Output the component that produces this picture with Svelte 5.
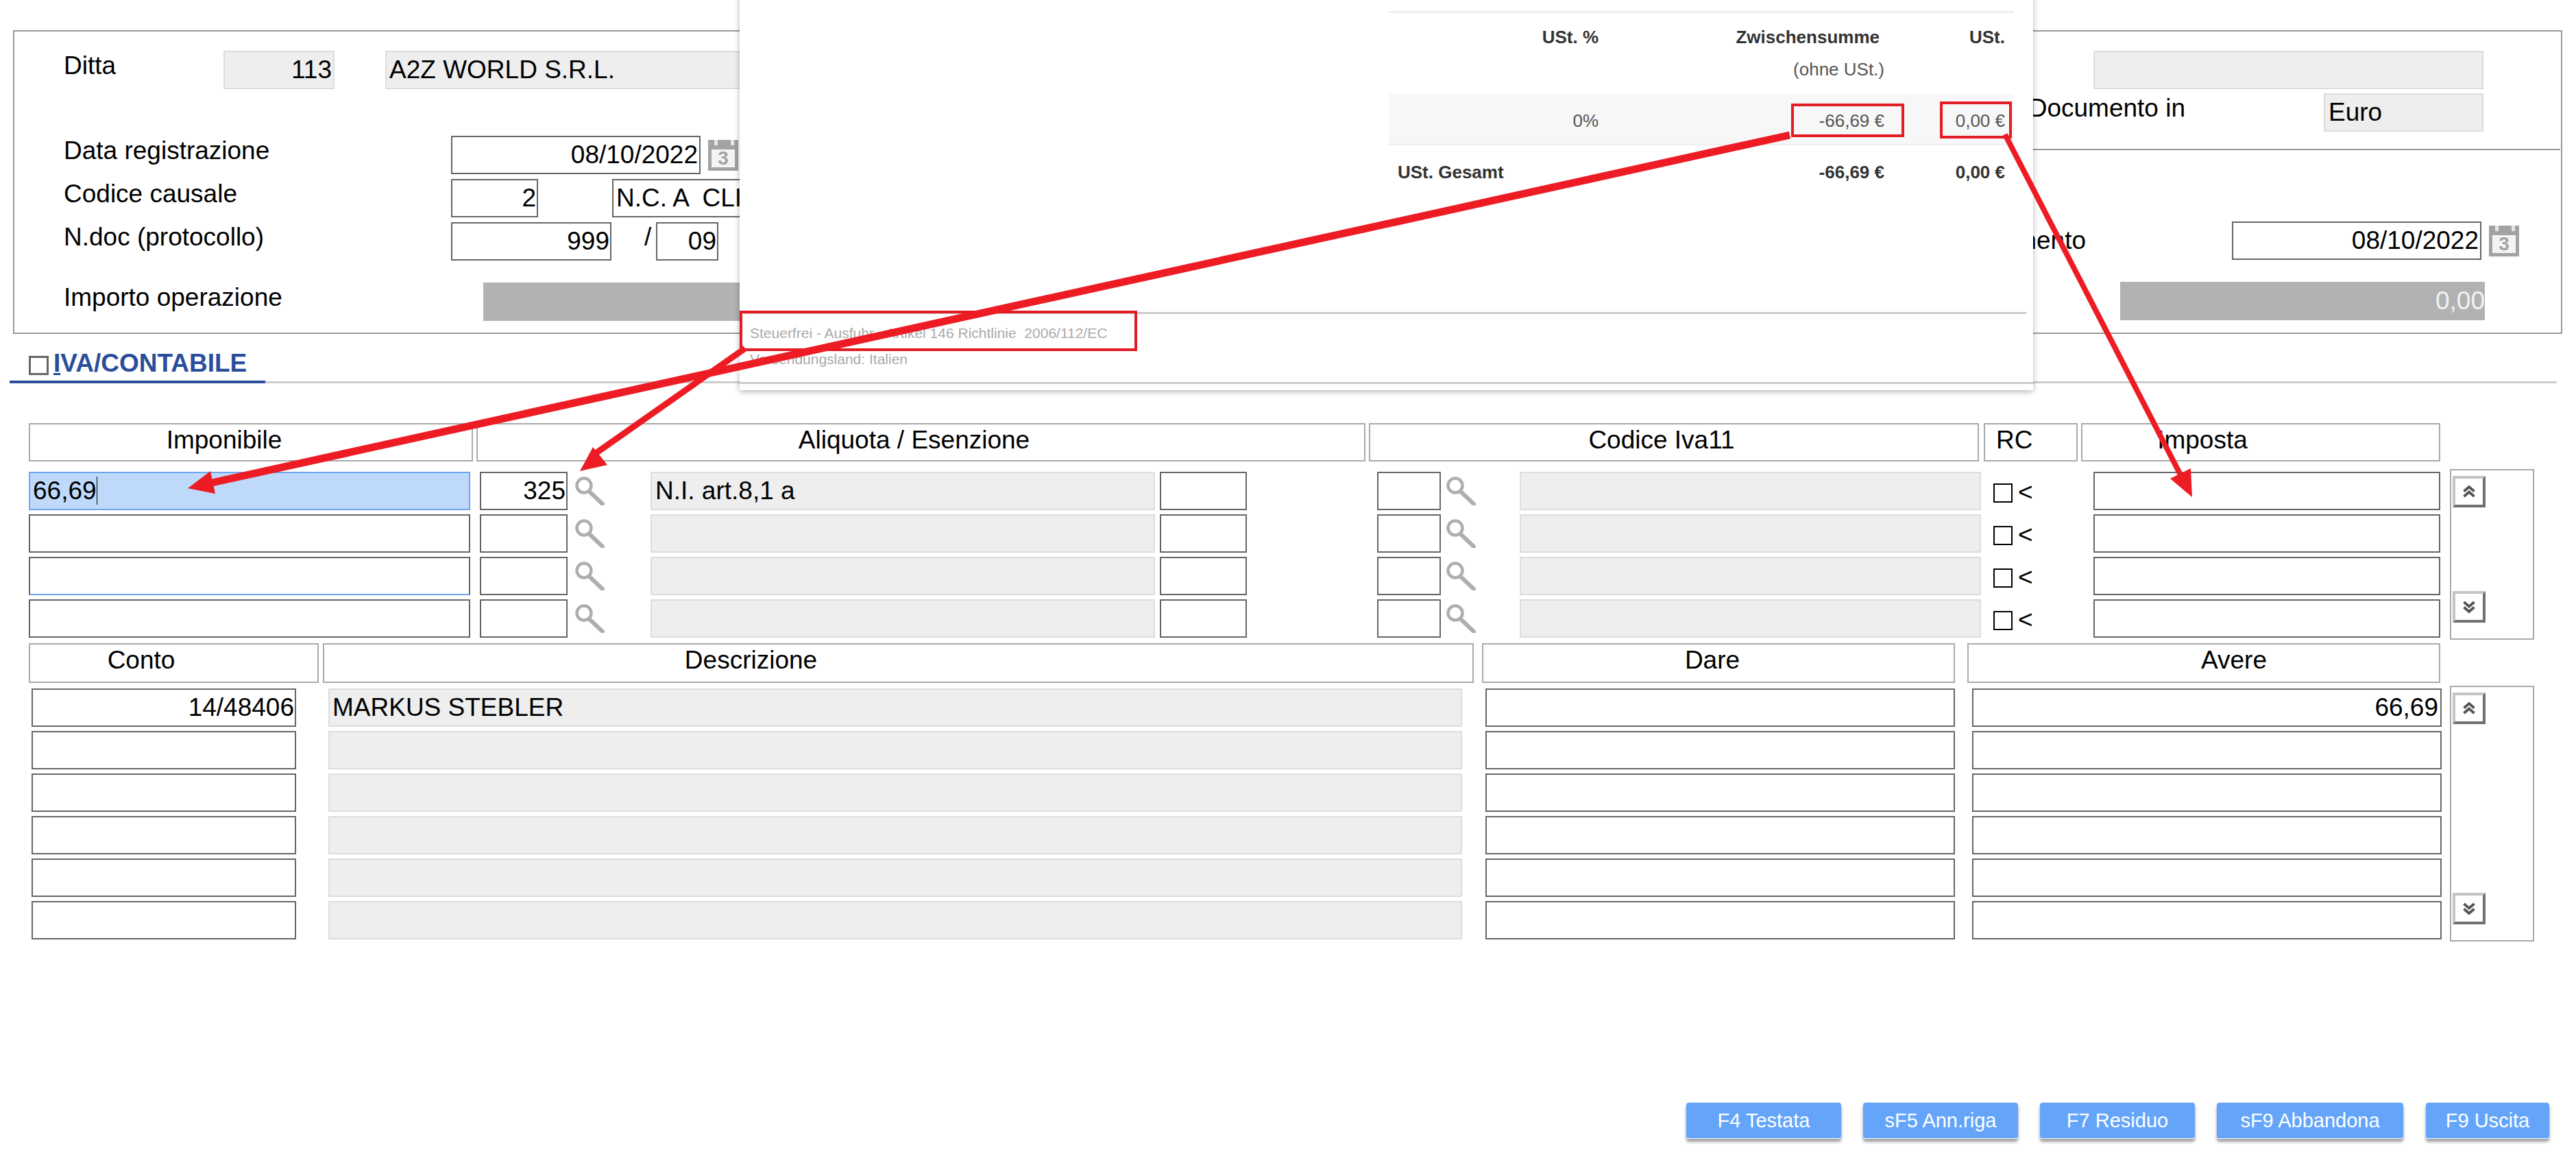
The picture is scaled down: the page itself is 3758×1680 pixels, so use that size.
<script>
  const ivaRows = [
    { imp: '66,69', active: true, ali: '325', desc: 'N.I. art.8,1 a' },
    { imp: '', ali: '', desc: '' },
    { imp: '', ali: '', desc: '', rim: true },
    { imp: '', ali: '', desc: '' }
  ];
  const contoRows = [
    { conto: '14/48406', desc: 'MARKUS STEBLER', avere: '66,69' },
    { conto: '', desc: '', avere: '' },
    { conto: '', desc: '', avere: '' },
    { conto: '', desc: '', avere: '' },
    { conto: '', desc: '', avere: '' },
    { conto: '', desc: '', avere: '' }
  ];
  const actions = [
    { label: 'F4 Testata', cls: 'b226' },
    { label: 'sF5 Ann.riga', cls: 'b226' },
    { label: 'F7 Residuo', cls: 'b226' },
    { label: 'sF9 Abbandona', cls: 'b272' },
    { label: 'F9 Uscita', cls: 'b180' }
  ];
</script>

{#snippet calendar()}
  <svg class="cal" viewBox="0 0 44 45" aria-hidden="true">
    <rect x="0" y="0" width="44" height="45" fill="#a3a3a3" />
    <rect x="9" y="0" width="5" height="8" fill="#e6e6e6" />
    <rect x="33" y="0" width="5" height="8" fill="#e6e6e6" />
    <rect x="5" y="14" width="34" height="26" fill="#f4f4f4" />
    <text x="22" y="36" text-anchor="middle" class="cal-num">3</text>
  </svg>
{/snippet}

{#snippet lens()}
  <svg class="lens" viewBox="0 0 44 43" aria-hidden="true">
    <circle cx="13" cy="14" r="10.5" fill="none" stroke="#aeaeae" stroke-width="4.5" />
    <path d="M21 23 L40 41" stroke="#aeaeae" stroke-width="6" stroke-linecap="round" />
  </svg>
{/snippet}

{#snippet chevrons(up)}
  <svg class="chev" viewBox="0 0 18 20" aria-hidden="true">
    {#if up}
      <path d="M1.5 9.5 L9 3 L16.5 9.5 M1.5 17 L9 10.5 L16.5 17" fill="none" stroke="#555" stroke-width="3.8" />
    {:else}
      <path d="M1.5 3 L9 9.5 L16.5 3 M1.5 10.5 L9 17 L16.5 10.5" fill="none" stroke="#555" stroke-width="3.8" />
    {/if}
  </svg>
{/snippet}

<div class="page">
  <section class="head">
    <div class="head-left">
      <div class="row r1">
        <span class="label l-ditta">Ditta</span>
        <div class="field ro num f-ditta">113</div>
        <div class="field ro f-rag">A2Z WORLD S.R.L.</div>
      </div>
      <div class="row r2">
        <span class="label l-wide">Data registrazione</span>
        <div class="field num f-date">08/10/2022</div>
        <div class="cal-gap">{@render calendar()}</div>
      </div>
      <div class="row r3">
        <span class="label l-wide">Codice causale</span>
        <div class="field num f-cau">2</div>
        <div class="field f-caud">N.C. A  CLIENTE</div>
      </div>
      <div class="row r3">
        <span class="label l-wide">N.doc (protocollo)</span>
        <div class="field num f-doc">999</div>
        <span class="slash">/</span>
        <div class="field num f-yr">09</div>
      </div>
      <div class="row r5">
        <span class="label l-imp">Importo operazione</span>
        <div class="total t-left"></div>
      </div>
    </div>
    <div class="head-right">
      <div class="hr-top">
        <div class="row">
          <div class="field ro f-rt"></div>
        </div>
        <div class="row r2b">
          <span class="label l-docin">Documento in</span>
          <div class="field ro f-euro">Euro</div>
        </div>
      </div>
      <div class="hr-bottom">
        <div class="row">
          <span class="label l-ddoc">Data documento</span>
          <div class="field num f-date2">08/10/2022</div>
          <div class="cal-gap">{@render calendar()}</div>
        </div>
        <div class="row r5">
          <div class="total t-right">0,00</div>
        </div>
      </div>
    </div>
  </section>

  <div class="tabbar">
    <div class="tab">
      <span class="tab-box"></span>
      <span class="tab-text"><u>I</u>VA/CONTABILE</span>
    </div>
  </div>

  <div class="hrow h-iva">
    <div class="hcell c-imp">Imponibile</div>
    <div class="hcell c-ali">Aliquota / Esenzione</div>
    <div class="hcell c-cod">Codice Iva11</div>
    <div class="hcell c-rc">RC</div>
    <div class="hcell c-ims">Imposta</div>
  </div>

  <div class="block b-iva">
    <div class="rows">
      {#each ivaRows as r}
        <div class="row drow">
          <div class="field i-imp" class:active={r.active} class:rim={r.rim}>
            {r.imp}{#if r.active}<span class="caret"></span>{/if}
          </div>
          <div class="field num i-ali">{r.ali}</div>
          <div class="lens-wrap">{@render lens()}</div>
          <div class="field ro i-desc">{r.desc}</div>
          <div class="field i-small"></div>
          <div class="field i-cod"></div>
          <div class="lens-wrap2">{@render lens()}</div>
          <div class="field ro i-cdesc"></div>
          <span class="check"></span>
          <span class="lt">&lt;</span>
          <div class="field i-ims"></div>
        </div>
      {/each}
    </div>
    <div class="scroll s-iva">
      <div class="sbtn">{@render chevrons(true)}</div>
      <div class="sbtn">{@render chevrons(false)}</div>
    </div>
  </div>

  <div class="hrow h-conto">
    <div class="hcell c-conto">Conto</div>
    <div class="hcell c-descr">Descrizione</div>
    <div class="hcell c-dare">Dare</div>
    <div class="hcell c-avere">Avere</div>
  </div>

  <div class="block b-conto">
    <div class="rows">
      {#each contoRows as r}
        <div class="row drow">
          <div class="field num j-conto">{r.conto}</div>
          <div class="field ro j-desc">{r.desc}</div>
          <div class="field j-dare"></div>
          <div class="field num j-avere">{r.avere}</div>
        </div>
      {/each}
    </div>
    <div class="scroll s-conto">
      <div class="sbtn">{@render chevrons(true)}</div>
      <div class="sbtn">{@render chevrons(false)}</div>
    </div>
  </div>

  <div class="actions">
    {#each actions as a}
      <button class="action {a.cls}">{a.label}</button>
    {/each}
  </div>

  <aside class="popup">
    <div class="vat">
      <div class="vat-head">
        <span class="th">USt. %</span>
        <span class="th th-mid">Zwischensumme</span>
        <span class="th">USt.</span>
      </div>
      <div class="vat-sub">
        <span></span>
        <span>(ohne USt.)</span>
        <span></span>
      </div>
      <div class="vat-row">
        <span>0%</span>
        <span>-66,69 €</span>
        <span>0,00 €</span>
      </div>
      <div class="vat-total">
        <span class="tl">USt. Gesamt</span>
        <span>-66,69 €</span>
        <span>0,00 €</span>
      </div>
    </div>
    <div class="foot-line"></div>
    <p class="foot f1">Steuerfrei - Ausfuhr - Artikel 146 Richtlinie  2006/112/EC</p>
    <p class="foot f2">Versendungsland: Italien</p>
    <div class="foot-rule"></div>
  </aside>

  <svg class="marks" viewBox="0 0 3758 1680" aria-hidden="true">
    <rect x="1081" y="455" width="576" height="55" class="mbox" />
    <rect x="2615" y="153" width="161" height="45" class="mbox" />
    <rect x="2832" y="150" width="101" height="50" class="mbox" />
    <path d="M2611 197 L300 706" class="mline" stroke-width="11" />
    <polygon points="307,687 274,712 314,720" class="mhead" />
    <path d="M1087 508 L862 666" class="mline" stroke-width="9" />
    <polygon points="865,652 846,687 886,678" class="mhead" />
    <path d="M2925 196 L3188 706" class="mline" stroke-width="8" />
    <polygon points="3196,683 3198,725 3166,698" class="mhead" />
  </svg>
</div>

<style>
  :global(body) {
    margin: 0;
    background: #fff;
    overflow: hidden;
  }
  .page {
    position: relative;
    width: 3758px;
    height: 1680px;
    overflow: hidden;
    background: #fff;
    font-family: "Liberation Sans", Arial, sans-serif;
    font-size: 37px;
    color: #000;
    padding-top: 44px;
    box-sizing: border-box;
  }
  .row { display: flex; align-items: flex-start; }

  /* testata */
  .head {
    margin-left: 19px;
    width: 3719px;
    height: 443px;
    box-sizing: border-box;
    border: 2px solid #999;
    padding: 1px;
    display: flex;
  }
  .head-left { width: 2378px; flex: none; padding-top: 27px; }
  .head-right { flex: 1; }
  .hr-top { height: 172px; box-sizing: border-box; padding-top: 27px; border-bottom: 2px solid #999; }
  .hr-bottom { padding-top: 104px; }
  .r2 { margin-top: 68px; }
  .r2b { margin-top: 6px; }
  .r3 { margin-top: 7px; }
  .r5 { margin-top: 32px; }
  .label { line-height: 44px; white-space: nowrap; flex: none; }
  .l-ditta { margin-left: 71px; width: 233px; }
  .l-wide { margin-left: 71px; width: 565px; }
  .l-imp { margin-left: 71px; width: 612px; }
  .l-docin { width: 788px; text-align: right; }
  .l-ddoc { width: 643px; text-align: right; line-height: 56px; }

  .field {
    height: 56px;
    line-height: 52px;
    box-sizing: border-box;
    border: 2px solid #666;
    background: #fff;
    padding: 0 4px;
    flex: none;
    white-space: pre;
    overflow: hidden;
  }
  .field.ro { background: #eee; border: 2px solid #ddd; line-height: 52px; }
  .field.num { text-align: right; padding: 0 1px 0 0; }
  .f-ditta { width: 162px; padding-right: 2px !important; }
  .f-rag { width: 1500px; margin-left: 74px; padding-left: 4px; }
  .f-date { width: 364px; padding-right: 2px !important; }
  .f-cau { width: 127px; }
  .f-caud { width: 900px; margin-left: 108px; padding-left: 4px; }
  .f-doc { width: 234px; }
  .slash { line-height: 44px; margin-left: 48px; width: 17px; flex: none; }
  .f-yr { width: 91px; }
  .cal-gap { margin-left: 11px; margin-top: 6px; flex: none; }
  .cal { display: block; width: 44px; height: 45px; }
  .cal-num { font-size: 28px; font-weight: bold; fill: #a3a3a3; font-family: "Liberation Sans", sans-serif; }
  .total {
    height: 56px;
    line-height: 56px;
    background: #b0b2b4;
    text-align: right;
    color: #f2f2f2;
    box-sizing: border-box;
    flex: none;
  }
  .t-left { width: 1600px; }
  .t-right { width: 532px; margin-left: 693px; }
  .f-rt { width: 569px; margin-left: 654px; }
  .f-euro { width: 233px; margin-left: 202px; padding-left: 5px; }
  .f-date2 { width: 364px; margin-left: 213px; padding-right: 2px !important; }

  /* tab */
  .tabbar {
    margin-left: 14px;
    width: 3716px;
    height: 72px;
    box-sizing: border-box;
    border-bottom: 3px solid #ccc;
    display: flex;
    align-items: flex-end;
  }
  .tab {
    width: 373px;
    height: 52px;
    box-sizing: border-box;
    border-bottom: 4px solid #2a4d9c;
    margin-bottom: -3px;
    padding-left: 28px;
    display: flex;
    align-items: flex-start;
    color: #2a4d9c;
    font-weight: bold;
  }
  .tab-box {
    width: 29px;
    height: 28px;
    margin-top: 12px;
    box-sizing: border-box;
    border: 3px solid #666;
    flex: none;
  }
  .tab-text { margin-left: 7px; line-height: 46px; }

  /* intestazioni */
  .hrow { display: flex; margin-left: 42px; }
  .h-iva { margin-top: 58px; }
  .h-conto { margin-top: 5px; }
  .hcell {
    height: 56px;
    line-height: 46px;
    box-sizing: border-box;
    border: 2px solid #aaa;
    text-align: center;
    flex: none;
    white-space: nowrap;
  }
  .h-conto .hcell { height: 58px; }
  .c-imp { width: 648px; padding-right: 78px; }
  .c-ali { width: 1297px; margin-left: 5px; padding-right: 20px; }
  .c-cod { width: 890px; margin-left: 5px; padding-right: 36px; }
  .c-rc { width: 137px; margin-left: 7px; text-align: left; padding-left: 16px; }
  .c-ims { width: 524px; margin-left: 5px; padding-right: 170px; }
  .c-conto { width: 423px; padding-right: 95px; }
  .c-descr { width: 1679px; margin-left: 6px; padding-right: 430px; }
  .c-dare { width: 690px; margin-left: 12px; padding-right: 18px; }
  .c-avere { width: 690px; margin-left: 18px; padding-left: 88px; }

  /* righe */
  .block { display: flex; align-items: flex-start; margin-top: 4px; }
  .b-iva { margin-top: 11px; }
  .rows { padding-top: 4px; display: flex; flex-direction: column; gap: 6px; }
  .i-imp { width: 644px; margin-left: 42px; }
  .i-imp.active { background: #bfd9fb; border-color: #6ea6ef; }
  .i-imp.rim { border-bottom-color: #6ea6ef; }
  .caret {
    display: inline-block;
    width: 1px;
    height: 41px;
    background: #000;
    vertical-align: top;
    margin-top: 5px;
  }
  .i-ali { width: 128px; margin-left: 14px; }
  .lens-wrap { margin-left: 11px; margin-top: 6px; width: 44px; flex: none; }
  .lens-wrap2 { margin-left: 8px; margin-top: 6px; width: 44px; flex: none; }
  .lens { display: block; width: 44px; height: 43px; }
  .i-desc { width: 736px; margin-left: 66px; padding-left: 5px; }
  .i-small { width: 127px; margin-left: 7px; }
  .i-cod { width: 93px; margin-left: 190px; }
  .i-cdesc { width: 673px; margin-left: 63px; }
  .check {
    width: 28px;
    height: 28px;
    margin-left: 18px;
    margin-top: 17px;
    box-sizing: border-box;
    border: 2px solid #000;
    flex: none;
  }
  .lt { width: 110px; margin-left: 8px; height: 56px; line-height: 60px; flex: none; }
  .i-ims { width: 506px; }

  .j-conto { width: 386px; margin-left: 46px; }
  .j-desc { width: 1654px; margin-left: 47px; padding-left: 4px; }
  .j-dare { width: 685px; margin-left: 34px; }
  .j-avere { width: 685px; margin-left: 25px; padding-right: 3px !important; }

  .scroll {
    width: 123px;
    box-sizing: border-box;
    border: 2px solid #aaa;
    padding: 8px 0 23px 2px;
    flex: none;
    display: flex;
    flex-direction: column;
    justify-content: space-between;
    align-items: flex-start;
  }
  .s-iva { height: 249px; margin-left: 14px; }
  .s-conto { height: 373px; margin-left: 12px; }
  .sbtn {
    width: 48px;
    height: 46px;
    box-sizing: border-box;
    border: 4px solid;
    border-color: #c4c4c4 #707070 #707070 #c4c4c4;
    display: flex;
    align-items: center;
    justify-content: center;
    background: #fff;
  }
  .chev { width: 18px; height: 20px; display: block; }

  /* azioni */
  .actions {
    display: flex;
    justify-content: flex-end;
    gap: 32px;
    margin-top: 235px;
    padding-right: 39px;
  }
  .action {
    height: 53px;
    border: 0;
    border-bottom: 1px solid #fff;
    border-radius: 4px;
    background: #64a5fa;
    color: #fff;
    font-family: "Liberation Sans", Arial, sans-serif;
    font-size: 29px;
    padding: 0;
    box-shadow: 0 4px 4px rgba(0, 0, 0, 0.4);
  }
  .b226 { width: 226px; }
  .b272 { width: 272px; margin-right: 1px; }
  .b180 { width: 180px; }

  /* documento sovrapposto */
  .popup {
    position: absolute;
    left: 1079px;
    top: -20px;
    width: 1887px;
    height: 589px;
    box-sizing: border-box;
    background: #fff;
    box-shadow: 0 2px 8px rgba(0, 0, 0, 0.3);
    padding-top: 36px;
    font-size: 26px;
    color: #555;
  }
  .vat {
    margin-left: 947px;
    width: 912px;
    border-top: 3px solid #eee;
  }
  .vat-head, .vat-sub, .vat-row, .vat-total {
    display: grid;
    grid-template-columns: 306px 417px 176px 13px;
    text-align: right;
  }
  .vat-head { height: 62px; line-height: 70px; color: #333; font-weight: bold; }
  .th-mid { padding-right: 7px; }
  .vat-sub { height: 56px; line-height: 40px; }
  .vat-row {
    height: 75px;
    line-height: 78px;
    background: #f7f7f7;
    border-bottom: 2px solid #eee;
    box-sizing: border-box;
  }
  .vat-total { height: 78px; line-height: 78px; font-weight: bold; color: #333; }
  .tl { text-align: left; padding-left: 13px; }
  .foot-line { height: 3px; background: #ccc; margin: 165px 10px 0 6px; }
  .foot {
    margin: 0;
    white-space: pre;
    font-size: 21px;
    color: #aaa;
    margin-left: 15px;
    line-height: 38px;
  }
  .f1 { margin-top: 9px; }
  .foot-rule { height: 3px; background: #ccc; margin-top: 14px; }

  .marks {
    position: absolute;
    left: 0;
    top: 0;
    width: 3758px;
    height: 1680px;
    pointer-events: none;
  }
  .mbox { fill: none; stroke: #e31b23; stroke-width: 4; }
  .mline { stroke: #ed1c24; fill: none; }
  .mhead { fill: #ed1c24; }
</style>
